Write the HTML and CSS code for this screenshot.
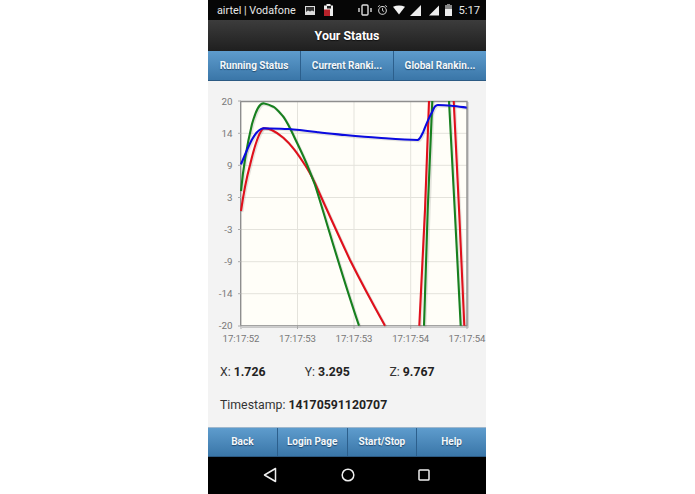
FILE: index.html
```html
<!DOCTYPE html>
<html lang="en">
<head>
<meta charset="utf-8">
<title>Your Status</title>
<link rel="stylesheet" href="styles.css">
</head>
<body>
<div class="phone">
  <div class="statusbar">
    <span class="carrier">airtel | Vodafone</span>
    <svg class="ic-photo" width="10" height="9" viewBox="0 0 10 9"><rect x="0.5" y="0.5" width="9" height="8" fill="#333" stroke="#ddd" stroke-width="1"/><path d="M1 8V6l2-1.500 2 1 2-1 2 1V8z" fill="#ddd"/></svg>
    <svg class="ic-sim" width="9" height="12" viewBox="0 0 9 12"><path d="M2.500 0h4v1.500h2.500V12H0V1.500h2.500z" fill="#eee"/><rect x="0" y="5.500" width="6" height="6.500" fill="#b8222a"/><rect x="3" y="2" width="4" height="2.500" fill="#222"/></svg>
    <span class="status-right">
      <svg width="14" height="12" viewBox="0 0 14 12"><rect x="4" y="1" width="6" height="10" rx="1" fill="none" stroke="#ddd" stroke-width="1.400"/><path d="M1 4v4M13 4v4" stroke="#ddd" stroke-width="1.400"/></svg>
      <svg width="11" height="12" viewBox="0 0 12 12"><circle cx="6" cy="6.500" r="4.200" fill="none" stroke="#ddd" stroke-width="1.100"/><path d="M6 4v2.700l1.800 1M1 2.600 3 1M11 2.600 9 1" fill="none" stroke="#ddd" stroke-width="1"/></svg>
      <svg width="12" height="10" viewBox="0 0 13 10"><path d="M0 1.500Q6.500 -1.500 13 1.500L6.500 10z" fill="#f2f2f2"/></svg>
      <svg width="11" height="11" viewBox="0 0 11 11"><path d="M11 0v11H0z" fill="#eee"/></svg>
      <svg class="gap-sig" width="10" height="11" viewBox="0 0 11 11"><path d="M11 0v11H0z" fill="#eee"/></svg>
      <svg class="gap-bat" width="7" height="12" viewBox="0 0 7 12"><path d="M2 0h3v1h2v11H0V1h2z" fill="#888"/><rect y="5" width="7" height="7" fill="#eee"/></svg>
      <span class="clock">5:17</span>
    </span>
  </div>
  <div class="header">Your Status</div>
  <nav class="tabs">
    <a class="btn">Running Status</a>
    <a class="btn">Current Ranki...</a>
    <a class="btn">Global Rankin...</a>
  </nav>
  <main class="content">
    <svg class="chart" width="278" height="264" viewBox="208 90 278 264">
      <rect class="plot-bg" x="240.500" y="101" width="226.500" height="225"/>
      <g class="grid">
        <path d="M297.500 101V326M354 101V326M410.700 101V326"/>
        <path d="M241 133.300H467M241 165.300H467M241 197.500H467M241 229.500H467M241 261.700H467M241 293.700H467"/>
      </g>
      <path class="plot-shadow" d="M468 102V327.200H242"/>
      <path class="plot-border" d="M240.700 326V101.500H467V326"/>
      <path class="plot-base" d="M240.700 325.700H467"/>
      <path class="ticks" d="M238 101h3M238 133.300h3M238 165.300h3M238 197.500h3M238 229.500h3M238 261.700h3M238 293.700h3M238 326h3M241 326v3M297.500 326v3M354 326v3M410.700 326v3M467 326v3"/>
      <g class="ylabels">
        <text x="232.500" y="105">20</text>
        <text x="232.500" y="137">14</text>
        <text x="232.500" y="169">9</text>
        <text x="232.500" y="201">3</text>
        <text x="232.500" y="233">-3</text>
        <text x="232.500" y="265">-9</text>
        <text x="232.500" y="297">-14</text>
        <text x="232.500" y="329">-20</text>
      </g>
      <g class="xlabels">
        <text x="241" y="342">17:17:52</text>
        <text x="297.500" y="342">17:17:53</text>
        <text x="354" y="342">17:17:53</text>
        <text x="410.700" y="342">17:17:54</text>
        <text x="467" y="342">17:17:54</text>
      </g>
      <g class="shadows">
        <path d="M241 211C244 190 247 176 250 165C254 148 258 133 263.300 128.300C266 128 269 128.600 271.700 130C276 132 280 135 283.300 137.700C287 141 290 144 293.300 148.300C298 154 301 159 305 165C309 171 312 177 315 183.300C322 199 335 228 350 260C362 284 374 306 385 325.700"/>
        <path d="M241 191C243 170 247 145 252 124C256 110 259 104 263.300 103.300C267 104 270 105 273.300 106.700C277 109 280 113 283.300 116.700C287 122 290 128 293.300 135C297 143 301 151 305 160C309 169 312 177 315 185C325 216 340 270 359 325.700"/>
        <path d="M419.300 325.700L429 101M453.700 101L464.300 325.700M424 325.700L432.300 101M449 101L460.700 325.700"/>
        <path d="M241 164.300C244 157 248 147 251.700 140C255 134 259 129 263.300 128.300C272 128.500 280 128.500 288.300 129C298 129.700 308 131 318.300 132.300C328 133.500 338 134.300 345 135C356 136 367 137 378.300 137.700C391 138.600 405 139.800 417.700 140C420 139.500 421.500 135.500 423.300 131.700C426 125 429 117 432.300 111.700C434 107 436 105 437.700 105C442 105 447 105.300 451.700 105.700C457 106 462 107 466.700 107.700"/>
      </g>
      <g class="lines">
        <path class="red" d="M241 211C244 190 247 176 250 165C254 148 258 133 263.300 128.300C266 128 269 128.600 271.700 130C276 132 280 135 283.300 137.700C287 141 290 144 293.300 148.300C298 154 301 159 305 165C309 171 312 177 315 183.300C322 199 335 228 350 260C362 284 374 306 385 325.700"/>
        <path class="red" d="M419.300 325.700L425 210L429 101M453.700 101L459.300 215L464.300 325.700"/>
        <path class="green" d="M241 191C243 170 247 145 252 124C256 110 259 104 263.300 103.300C267 104 270 105 273.300 106.700C277 109 280 113 283.300 116.700C287 122 290 128 293.300 135C297 143 301 151 305 160C309 169 312 177 315 185C325 216 340 270 359 325.700"/>
        <path class="green" d="M424 325.700L427.700 210L432.300 101M449 101L455 215L460.700 325.700"/>
        <path class="blue" d="M241 164.300C244 157 248 147 251.700 140C255 134 259 129 263.300 128.300C272 128.500 280 128.500 288.300 129C298 129.700 308 131 318.300 132.300C328 133.500 338 134.300 345 135C356 136 367 137 378.300 137.700C391 138.600 405 139.800 417.700 140C420 139.500 421.500 135.500 423.300 131.700C426 125 429 117 432.300 111.700C434 107 436 105 437.700 105C442 105 447 105.300 451.700 105.700C457 106 462 107 466.700 107.700"/>
      </g>
    </svg>
    <div class="readings">
      <span class="reading">X: <b>1.726</b></span>
      <span class="reading">Y: <b>3.295</b></span>
      <span class="reading">Z: <b>9.767</b></span>
    </div>
    <div class="stamp">Timestamp: <b>14170591120707</b></div>
  </main>
  <nav class="tabs footer">
    <a class="btn">Back</a>
    <a class="btn">Login Page</a>
    <a class="btn">Start/Stop</a>
    <a class="btn">Help</a>
  </nav>
  <div class="navbar">
    <svg width="14" height="16" viewBox="0 0 14 16"><path d="M12.500 1.500V14.500L1.500 8z" fill="none" stroke="#eee" stroke-width="1.500" stroke-linejoin="round"/></svg>
    <svg width="14" height="14" viewBox="0 0 14 14"><circle cx="7" cy="7" r="5.800" fill="none" stroke="#eee" stroke-width="1.500"/></svg>
    <svg width="12" height="12" viewBox="0 0 12 12"><rect x="1" y="1" width="10" height="10" rx="0.800" fill="none" stroke="#eee" stroke-width="1.500"/></svg>
  </div>
</div>
</body>
</html>
```
FILE: styles.css
```css
html, body { margin: 0; padding: 0; background: #fff; }
body { font-family: Roboto, "Liberation Sans", sans-serif; }
.phone { width: 278px; height: 494px; margin-left: 208px; display: flex; flex-direction: column; overflow: hidden; background: #f3f3f3; }
.statusbar { height: 20px; flex: none; box-sizing: border-box; background: #060606; color: #e8e8e8; display: flex; align-items: center; padding: 0 6px 0 9px; font-size: 10.8px; }
.ic-photo { margin-left: 9px; }
.ic-sim { margin-left: 9px; }
.status-right { margin-left: auto; display: flex; align-items: center; gap: 5px; }
.gap-sig { margin-left: 3px; }
.gap-bat { margin-left: 1px; }
.clock { margin-left: 1px; font-size: 11.2px; }
.header { height: 31px; flex: none; background: linear-gradient(#3c3c3c, #1f1f1f); color: #fff; font-weight: 700; font-size: 12.4px; display: flex; align-items: center; justify-content: center; padding-bottom: 1px; box-sizing: border-box; text-shadow: 0 1px 1px #111; }
.tabs { height: 30px; flex: none; display: flex; border-bottom: 1px solid #2c5a83; box-sizing: border-box; }
.btn { flex: 1 1 0; display: flex; align-items: center; justify-content: center; background: linear-gradient(#5e9ccd, #3a76a8); color: #f4f8fb; font-size: 10px; font-weight: 700; border-right: 1px solid #2c5f8c; text-shadow: 0 1px 1px #224a6e; }
.btn:last-child { border-right: 0; }
.content { flex: 1 1 auto; min-height: 0; }
.chart { display: block; margin-top: 9px; }
.grid path { fill: none; stroke: #e4e3dc; stroke-width: 1; }
.plot-bg { fill: #fffef8; }
.plot-shadow { fill: none; stroke: #c8c8c8; stroke-width: 1.500; }
.plot-border { fill: none; stroke: #8e8e8e; stroke-width: 1.400; }
.plot-base { fill: none; stroke: #8e8e8e; stroke-width: 1; }
.ticks { fill: none; stroke: #aaa; stroke-width: 1; }
.ylabels text { text-anchor: end; font-size: 9.800px; fill: #777; }
.xlabels text { text-anchor: middle; font-size: 9.600px; fill: #777; }
.shadows path { fill: none; stroke: #000; stroke-opacity: 0.1; stroke-width: 2.800; transform: translate(1px, 1px); }
.lines path { fill: none; stroke-width: 2.100; stroke-linejoin: round; }
.red { stroke: #e0101c; }
.green { stroke: #17801f; }
.blue { stroke: #0a0ae0; }
.readings { display: flex; padding: 9px 0 0 12px; font-size: 12.3px; color: #333; height: 17px; align-items: center; }
.reading { width: 84.700px; }
.reading b, .stamp b { color: #222; }
.stamp { padding: 17px 0 0 12px; font-size: 12.3px; color: #333; line-height: 17px; }
.footer { border-top: 1px solid #9fb7cc; border-bottom: 1px solid #2c5a83; }
.footer .btn { padding-bottom: 1px; }
.navbar { height: 37px; flex: none; background: #000; display: flex; align-items: center; justify-content: space-between; padding: 0 56px 1px 55px; box-sizing: border-box; }
```
